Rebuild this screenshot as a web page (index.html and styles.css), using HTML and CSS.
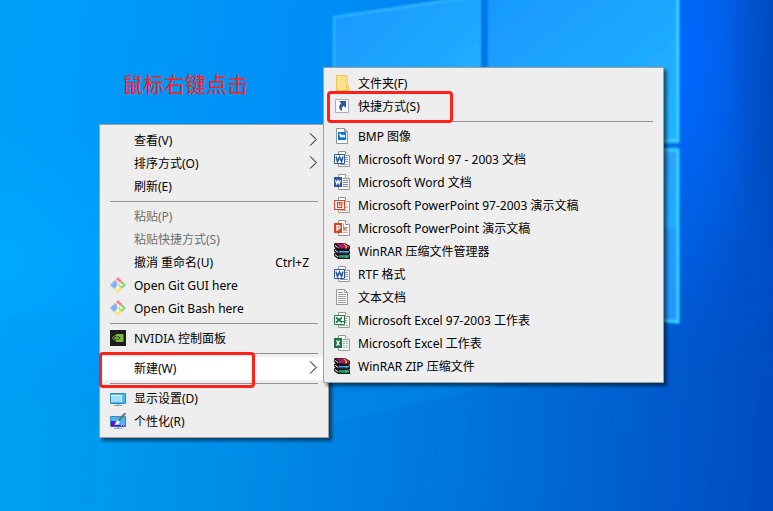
FILE: index.html
```html
<!DOCTYPE html>
<html lang="zh-CN">
<head>
<meta charset="utf-8">
<title>新建快捷方式</title>
<link rel="stylesheet" href="styles.css">
</head>
<body>
<svg class="defs" aria-hidden="true">
  <defs>
    <symbol id="chevron" viewBox="0 0 10 16">
      <path d="M1.500 1.500 7.500 7.500 1.500 13.500" fill="none" stroke="#e7a17c" stroke-width="1" opacity=".6"/>
      <path d="M2.800 1.500 8.800 7.500 2.800 13.500" fill="none" stroke="#3b8fe0" stroke-width="1" opacity=".7"/>
      <path d="M2.200 1.500 8.200 7.500 2.200 13.500" fill="none" stroke="#222" stroke-width=".9"/>
    </symbol>
    <symbol id="sheet" viewBox="0 0 16 16">
      <path d="M4.500.5h7l4 4v11h-11z" fill="#fff" stroke="#979797"/>
      <path d="M11.500.5v4h4" fill="#fff" stroke="#979797"/>
    </symbol>
    <symbol id="folder" viewBox="0 0 16 16">
      <path d="M2 0h11.500v11H15v4.500H2z" fill="#ffe18b"/>
      <path d="M2.500.5H13v10h1.500v5h-12zM12.500 15v-4.500" fill="none" stroke="#efc552"/>
    </symbol>
    <symbol id="shortcut" viewBox="0 0 16 16">
      <path d="M1.500 1.500h13v13h-13z" fill="#f9f9f9" stroke="#a9adb2"/>
      <path d="M5 3h7v7L9.800 7.800C8 9 7.500 10.500 8 13 4.500 11.500 4.500 7.500 7.200 5.200z" fill="#2b5797"/>
    </symbol>
    <symbol id="bmp" viewBox="0 0 16 16">
      <path d="M2.500.5h8l3 3v12h-11z" fill="#fff" stroke="#929292"/>
      <path d="M10.500.5v3h3" fill="none" stroke="#929292"/>
      <path d="M4 4h8v8H4z" fill="#0078d4"/>
      <path d="M5 6l1.500-.5L8 7.500 9 6.500l1 1 1-1v3H9.500L9 8.500 8 9.500H6.500z" fill="#fff"/>
    </symbol>
    <symbol id="word-old" viewBox="0 0 16 16">
      <use href="#sheet"/>
      <path d="M11 6.500h3M11 8.500h3M11 10.500h3M6 13.500h8" stroke="#8e9bb0"/>
      <path d="M.5 3.500h10v9H.5z" fill="#fff" stroke="#2b579a"/>
      <path d="M2 5.500 3.500 10.500 5.500 6 7.500 10.500 9 5.500" fill="none" stroke="#2b579a" stroke-width="1.600"/>
    </symbol>
    <symbol id="word" viewBox="0 0 16 16">
      <use href="#sheet"/>
      <path d="M9 4.500h2M9 6.500h5M9 8.500h5M9 10.500h5M9 12.500h5" stroke="#7088b0"/>
      <path d="M0 3h8v10H0z" fill="#2b579a"/>
      <path d="M1.500 6 2.800 10 4 6.500 5.200 10 6.500 6" fill="none" stroke="#fff" stroke-width="1.100"/>
    </symbol>
    <symbol id="ppt-old" viewBox="0 0 16 16">
      <use href="#sheet"/>
      <path d="M12 6v3M11 10.500h3M6 13.500h8" stroke="#e4a78e"/>
      <path d="M.5 3.500h10v9H.5z" fill="#fff" stroke="#d24726" stroke-width="1.200"/>
      <path d="M5 5.500H3.500v5h4V9M5.500 5.500v2.500H8V5.500z" fill="none" stroke="#d24726" stroke-width="1.200"/>
    </symbol>
    <symbol id="ppt" viewBox="0 0 16 16">
      <use href="#sheet"/>
      <path d="M10 3v4h4a4 4 0 0 1-5 3V4z" fill="#b99786"/>
      <path d="M9 10.500h5M9 12.500h5" stroke="#eda482"/>
      <path d="M0 3h8v10H0z" fill="#d24726"/>
      <path d="M3 11V5.700h1.500a1.500 1.500 0 0 1 0 3H3" fill="none" stroke="#fff" stroke-width="1.400"/>
    </symbol>
    <symbol id="excel-old" viewBox="0 0 16 16">
      <use href="#sheet"/>
      <path d="M11 6.500h3M11 8.500h3M11 10.500h3M6 13.500h8" stroke="#78ad8c" stroke-dasharray="2 1"/>
      <path d="M.5 3.500h10v9H.5z" fill="#fff" stroke="#217346"/>
      <path d="m2 5.500 6 5M8 5.500l-6 5" fill="none" stroke="#217346" stroke-width="1.700"/>
      <path d="M7 9.500h3" stroke="#217346"/>
    </symbol>
    <symbol id="excel" viewBox="0 0 16 16">
      <use href="#sheet"/>
      <path d="M9 4.500h2M9 6.500h5M9 8.500h5M9 10.500h5M9 12.500h5" stroke="#7bc196" stroke-dasharray="2 1"/>
      <path d="M0 3h8v10H0z" fill="#217346"/>
      <path d="m2.500 5.500 3 5M5.500 5.500l-3 5" fill="none" stroke="#fff" stroke-width="1.400"/>
    </symbol>
    <symbol id="text" viewBox="0 0 16 16">
      <path d="M2.500.5h8l3 3v12h-11z" fill="#fafafa" stroke="#979797"/>
      <path d="M10.500.5v3h3M4 3.500h5M4 5.500h8M4 7.500h8M4 9.500h8M4 11.500h8M4 13.500h8" fill="none" stroke="#a0a0a0"/>
    </symbol>
    <symbol id="winrar" viewBox="0 0 16 16">
      <path d="M1 0h10l5 3v3l-1 1 1 1v3l-1 .5 1 1V16H4l-4-3v-2.500l1.500-.5L0 8.500V6l1.500-.5L0 3.500V1z" fill="#1a1216"/>
      <path d="M1.500.5h9l4 2.500H5z" fill="#b5106a"/>
      <path d="M5 3.500h10v2H5z" fill="#8d0a4c"/>
      <path d="M5 3.500h10v.7H5z" fill="#e8579f"/>
      <path d="m.8 1.800 3.500 2.400v1L.8 2.800z" fill="#f4e3ec"/>
      <path d="M5 8h10v2.300H5z" fill="#1454b8"/>
      <path d="M5 8h10v1H5z" fill="#3fb0f0"/>
      <path d="m.8 6.500 3.500 2.400v1L.8 7.500z" fill="#e6eefc"/>
      <path d="M5 12.500h10V15H5z" fill="#077a52"/>
      <path d="M5 12.500h10v1H5z" fill="#2fd9a8"/>
      <path d="m.8 11 3.500 2.500v1L.8 12z" fill="#e8fbf1"/>
      <path d="m9 .5 1.500 0 2.500 2.500v2.500h-1.500V3z" fill="#d9b63a"/>
      <path d="M11.500 8H13v2.300h-1.500zM11.500 12.500H13V15h-1.500z" fill="#d9b63a" opacity=".5"/>
    </symbol>
    <symbol id="git" viewBox="0 0 16 16">
      <path d="m8 0 4 4-4 4-4-4z" fill="#ff7d84"/>
      <path d="m4 4 4 4-4 4-4-4z" fill="#80b3ff"/>
      <path d="m12 4 4 4-4 4-4-4z" fill="#87d76b"/>
      <path d="m8 8 4 4-4 4-4-4z" fill="#ffe080"/>
      <path d="M5.500 2.500 8 5v6M8 5l3.500 3" fill="none" stroke="#fff" stroke-width="1.100"/>
      <circle cx="8" cy="5" r="1" fill="#fff"/><circle cx="8" cy="11" r="1.200" fill="#fff"/><circle cx="11.500" cy="8" r="1.200" fill="#fff"/>
    </symbol>
    <symbol id="nvidia" viewBox="0 0 16 16">
      <path d="M0 0h16v16H0z" fill="#1d1d1d"/>
      <path d="M6 4h7.500v8H6z" fill="#76b93c"/>
      <path d="M2.200 8Q6 3 11 7.800 7 13 2.200 8z" fill="#1d1d1d" stroke="#76b93c"/>
      <path d="M4.500 8Q7 5 9 8 7 10.500 4.500 8z" fill="none" stroke="#76b93c"/>
      <circle cx="7" cy="8" r="1" fill="#76b93c"/>
    </symbol>
    <symbol id="display" viewBox="0 0 16 16">
      <path d="M.5 3.500h15v10H.5z" fill="#4db8ee" stroke="#3489b7"/>
      <path d="M1 5.500h10.500V12H1z" fill="#a3dcfa"/>
      <path d="M1 5.500h10.500V12" fill="none" stroke="#e4f7ff"/>
      <path d="M7 14h2v1h3v1H4v-1h3z" fill="#8aa5b4"/>
    </symbol>
    <symbol id="personalize" viewBox="0 0 16 16">
      <path d="M.5 3.500h15v10H.5z" fill="#4db8ee" stroke="#3489b7"/>
      <path d="M1 8h5l-1 4h10v1.500H1z" fill="#5b12dd"/>
      <path d="M11 12h1v1h-1zM13 12h1v1h-1z" fill="#fff"/>
      <path d="M15.500 0 8.500 8" stroke="#65737b" stroke-width="2.200"/>
      <path d="M8 7.500c1.500 0 2 1.500 1.500 2.500C8.500 12 6 12 4 11.500 6 11 5.500 8 8 7.500z" fill="#e8eef2"/>
      <path d="M7 14h2v1h3v1H4v-1h3z" fill="#8aa5b4"/>
    </symbol>
  </defs>
</svg>

<main class="desktop">
  <svg class="wallpaper" viewBox="0 0 773 511" preserveAspectRatio="none" aria-hidden="true">
    <defs>
      <linearGradient id="sky" gradientUnits="userSpaceOnUse" x1="0" y1="200" x2="773" y2="300">
        <stop offset="0" stop-color="#009ffa"/><stop offset=".4" stop-color="#008df6"/>
        <stop offset=".75" stop-color="#0070e6"/><stop offset=".9" stop-color="#0058d2"/><stop offset="1" stop-color="#004dc4"/>
      </linearGradient>
      <linearGradient id="ground" gradientUnits="userSpaceOnUse" x1="0" y1="440" x2="773" y2="500">
        <stop offset="0" stop-color="#00a4f2"/><stop offset=".3" stop-color="#008de8"/>
        <stop offset=".6" stop-color="#0074da"/><stop offset=".85" stop-color="#005acc"/><stop offset="1" stop-color="#004bc0"/>
      </linearGradient>
      <radialGradient id="glow"><stop offset="0" stop-color="#0067ff"/><stop offset="1" stop-color="#0067ff" stop-opacity="0"/></radialGradient>
      <radialGradient id="cyan"><stop offset="0" stop-color="#00a8ff"/><stop offset="1" stop-color="#00a8ff" stop-opacity="0"/></radialGradient>
      <radialGradient id="navy"><stop offset="0" stop-color="#003fb2"/><stop offset="1" stop-color="#003fb2" stop-opacity="0"/></radialGradient>
      <linearGradient id="pane" x1="0" y1="0" x2="1" y2="1"><stop offset="0" stop-color="#1898ff"/><stop offset="1" stop-color="#24b5ff"/></linearGradient>
      <linearGradient id="lowpane" x1="0" y1="0" x2="0" y2="1"><stop offset="0" stop-color="#2ba0fa"/><stop offset=".44" stop-color="#20adff"/><stop offset=".46" stop-color="#209dfa"/><stop offset="1" stop-color="#2396ff"/></linearGradient>
      <filter id="soft"><feGaussianBlur stdDeviation="1"/></filter>
      <filter id="haze" x="-20%" y="-20%" width="140%" height="140%"><feGaussianBlur stdDeviation="20"/></filter>
    </defs>
    <path d="M0 0h773v511H0z" fill="url(#sky)"/>
    <ellipse cx="0" cy="260" rx="180" ry="140" fill="url(#cyan)"/>
    <ellipse cx="685" cy="60" rx="85" ry="260" fill="url(#glow)"/>
    <ellipse cx="795" cy="60" rx="70" ry="230" fill="url(#navy)" opacity=".6"/>
    <path d="M-60 400 200 380 773 330 840 340V580H-60z" fill="url(#ground)" filter="url(#haze)"/>
    <path d="M230 460 330 424 560 370 440 370 200 440z" fill="#0094f5" opacity=".25" filter="url(#soft)"/>
    <path d="M0 318 100 302V511H0z" fill="#0092ee" opacity=".12" filter="url(#soft)"/>
    <g filter="url(#soft)">
      <path d="M481-3h7v144h190v8H481z" fill="#0075e8"/>
      <path d="M334 17 481-4v146H334z" fill="url(#pane)"/>
      <path d="M488-5h190v146H488z" fill="url(#pane)"/>
      <path d="M488 150h190v172L488 302z" fill="url(#lowpane)"/>
      <path d="M334 142V17L470-3" fill="none" stroke="#35bcff" stroke-width="2"/>
      <path d="M678-4v145h-30M648 150h30v172l-30-3" fill="none" stroke="#3ad5ff" stroke-width="3"/>
    </g>
  </svg>

  <h1 class="caption">鼠标右键点击</h1>

  <ul class="menu menu-desktop">
    <li class="item"><button type="button"><span class="icon"></span><span class="label">查看(V)</span><svg class="arrow"><use href="#chevron"/></svg></button></li>
    <li class="item"><button type="button"><span class="icon"></span><span class="label">排序方式(O)</span><svg class="arrow"><use href="#chevron"/></svg></button></li>
    <li class="item"><button type="button"><span class="icon"></span><span class="label">刷新(E)</span></button></li>
    <li class="separator"></li>
    <li class="item"><button type="button" disabled><span class="icon"></span><span class="label">粘贴(P)</span></button></li>
    <li class="item"><button type="button" disabled><span class="icon"></span><span class="label">粘贴快捷方式(S)</span></button></li>
    <li class="item"><button type="button"><span class="icon"></span><span class="label">撤消 重命名(U)</span><span class="key">Ctrl+Z</span></button></li>
    <li class="item"><button type="button"><svg class="icon"><use href="#git"/></svg><span class="label">Open Git GUI here</span></button></li>
    <li class="item"><button type="button"><svg class="icon"><use href="#git"/></svg><span class="label">Open Git Bash here</span></button></li>
    <li class="separator"></li>
    <li class="item"><button type="button"><svg class="icon"><use href="#nvidia"/></svg><span class="label">NVIDIA 控制面板</span></button></li>
    <li class="separator"></li>
    <li class="item open"><button type="button"><span class="icon"></span><span class="label">新建(W)</span><svg class="arrow"><use href="#chevron"/></svg></button><span class="mark mark-new"></span></li>
    <li class="separator"></li>
    <li class="item"><button type="button"><svg class="icon"><use href="#display"/></svg><span class="label">显示设置(D)</span></button></li>
    <li class="item"><button type="button"><svg class="icon"><use href="#personalize"/></svg><span class="label">个性化(R)</span></button></li>
  </ul>

  <ul class="menu menu-new">
    <li class="item"><button type="button"><svg class="icon"><use href="#folder"/></svg><span class="label">文件夹(F)</span></button></li>
    <li class="item"><button type="button"><svg class="icon"><use href="#shortcut"/></svg><span class="label">快捷方式(S)</span></button><span class="mark mark-shortcut"></span></li>
    <li class="separator"></li>
    <li class="item"><button type="button"><svg class="icon"><use href="#bmp"/></svg><span class="label">BMP 图像</span></button></li>
    <li class="item"><button type="button"><svg class="icon"><use href="#word-old"/></svg><span class="label">Microsoft Word 97 - 2003 文档</span></button></li>
    <li class="item"><button type="button"><svg class="icon"><use href="#word"/></svg><span class="label">Microsoft Word 文档</span></button></li>
    <li class="item"><button type="button"><svg class="icon"><use href="#ppt-old"/></svg><span class="label">Microsoft PowerPoint 97-2003 演示文稿</span></button></li>
    <li class="item"><button type="button"><svg class="icon"><use href="#ppt"/></svg><span class="label">Microsoft PowerPoint 演示文稿</span></button></li>
    <li class="item"><button type="button"><svg class="icon"><use href="#winrar"/></svg><span class="label">WinRAR 压缩文件管理器</span></button></li>
    <li class="item"><button type="button"><svg class="icon"><use href="#word-old"/></svg><span class="label">RTF 格式</span></button></li>
    <li class="item"><button type="button"><svg class="icon"><use href="#text"/></svg><span class="label">文本文档</span></button></li>
    <li class="item"><button type="button"><svg class="icon"><use href="#excel-old"/></svg><span class="label">Microsoft Excel 97-2003 工作表</span></button></li>
    <li class="item"><button type="button"><svg class="icon"><use href="#excel"/></svg><span class="label">Microsoft Excel 工作表</span></button></li>
    <li class="item"><button type="button"><svg class="icon"><use href="#winrar"/></svg><span class="label">WinRAR ZIP 压缩文件</span></button></li>
  </ul>
</main>
</body>
</html>
```
FILE: styles.css
```css
* {
  box-sizing: border-box;
}

body {
  margin: 0;
  font-family: "Noto Sans", "Noto Sans CJK SC", sans-serif;
  font-size: 12px;
  line-height: 23px;
  color: #000;
}

.defs {
  position: absolute;
  width: 0;
  height: 0;
}

.desktop {
  position: relative;
  min-height: 100vh;
  overflow: hidden;
}

.wallpaper {
  position: absolute;
  inset: 0;
  width: 100%;
  height: 100%;
}

.caption {
  position: absolute;
  left: 122px;
  top: 68px;
  margin: 0;
  font-family: "Noto Sans CJK SC", sans-serif;
  font-size: 21px;
  font-weight: 400;
  line-height: 30px;
  color: #ff2018;
}

/* Context menus float over the desktop */
.menu {
  position: absolute;
  margin: 0;
  padding: 4px 0;
  list-style: none;
  background: #eee;
  border: 1px solid #a0a0a0;
  box-shadow: 3px 3px 3px rgba(0, 0, 0, 0.5);
}

.menu-desktop {
  left: 99px;
  top: 124px;
  width: 230px;
}

.menu-new {
  left: 323px;
  top: 67px;
  width: 341px;
}

.item {
  position: relative;
}

.item button {
  display: flex;
  align-items: center;
  width: 100%;
  height: 23px;
  padding: 0 10px;
  border: 0;
  background: none;
  font: inherit;
  color: inherit;
  text-align: left;
  white-space: nowrap;
}

.item button:disabled {
  color: #6d6d6d;
}

.open button {
  background: #fff;
}

.icon {
  flex: none;
  width: 16px;
  height: 16px;
  margin: 0 8px 1px 0;
}

.label {
  flex: 1;
}

.key {
  margin-right: 9px;
}

.arrow {
  flex: none;
  width: 10px;
  height: 16px;
  margin-bottom: 1px;
}

.separator {
  height: 7px;
  padding: 3px 10px;
}

.separator::before {
  content: "";
  display: block;
  height: 1px;
  background: #919191;
}

/* Red frames that point out the entries to click */
.mark {
  position: absolute;
  border: 3px solid #ff2018;
  border-radius: 4px;
  pointer-events: none;
  z-index: 1;
}

.mark-new {
  inset: -5px auto -8px -1px;
  width: 156px;
}

.mark-shortcut {
  inset: -4px auto -5px 3px;
  width: 126px;
}
```
